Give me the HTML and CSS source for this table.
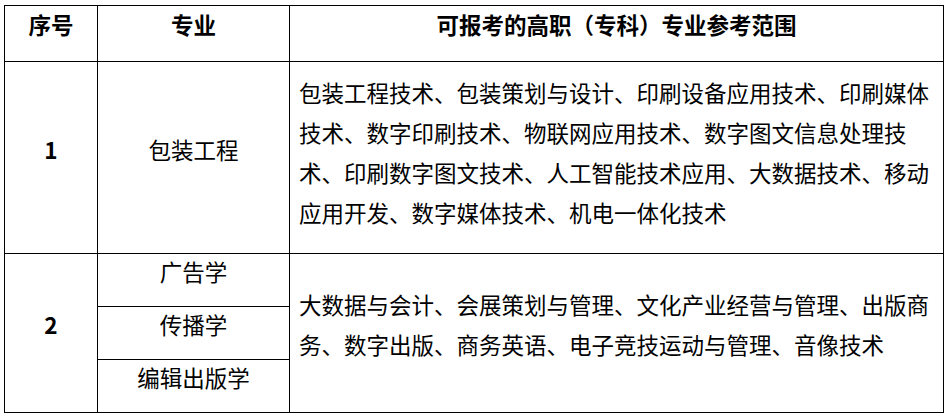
FILE: index.html
```html
<!DOCTYPE html>
<html lang="zh-CN">
<head>
<meta charset="utf-8">
<title>专业参考范围</title>
<link rel="stylesheet" href="styles.css">
</head>
<body>
<div class="wrap">
<table class="majors">
<colgroup>
<col class="c-no">
<col class="c-major">
<col class="c-range">
</colgroup>
<thead>
<tr class="r-head">
<th>序号</th>
<th>专业</th>
<th>可报考的高职（专科）专业参考范围</th>
</tr>
</thead>
<tbody>
<tr class="r-big">
<td class="no">1</td>
<td class="major">包装工程</td>
<td class="range">包装工程技术、包装策划与设计、印刷设备应用技术、印刷媒体<br>技术、数字印刷技术、物联网应用技术、数字图文信息处理技<br>术、印刷数字图文技术、人工智能技术应用、大数据技术、移动<br>应用开发、数字媒体技术、机电一体化技术</td>
</tr>
<tr class="r-sub">
<td class="no" rowspan="3">2</td>
<td class="major">广告学</td>
<td class="range range-2" rowspan="3">大数据与会计、会展策划与管理、文化产业经营与管理、出版商<br>务、数字出版、商务英语、电子竞技运动与管理、音像技术</td>
</tr>
<tr class="r-sub">
<td class="major">传播学</td>
</tr>
<tr class="r-sub">
<td class="major">编辑出版学</td>
</tr>
</tbody>
</table>
</div>
</body>
</html>
```
FILE: styles.css
```css
html, body {
  margin: 0;
  padding: 0;
  background: #fff;
}
.wrap {
  padding: 5px 0 0 4px;
}
.majors {
  border-collapse: collapse;
  table-layout: fixed;
  width: 939px;
  font-family: "Noto Sans CJK SC", "Noto Sans", sans-serif;
  font-size: 22.5px;
  color: #000;
}
.c-no { width: 93px; }
.c-major { width: 192px; }
.c-range { width: 654px; }
.majors th,
.majors td {
  border: 1px solid #000;
  padding: 0 0 18px 0;
  vertical-align: middle;
  text-align: center;
  line-height: 40px;
  white-space: nowrap;
}
.majors th {
  font-weight: 700;
}
.r-head { height: 56px; }
.majors .r-head th { padding-bottom: 20px; line-height: 30px; }
.r-big { height: 192px; }
.r-sub { height: 53px; }
.majors .r-sub .major { line-height: 30px; }
.majors .no { font-weight: 700; }
.majors .range {
  text-align: left;
  padding-left: 9px;
  padding-bottom: 12px;
}
.majors .range-2 {
  padding-bottom: 18px;
}
```
